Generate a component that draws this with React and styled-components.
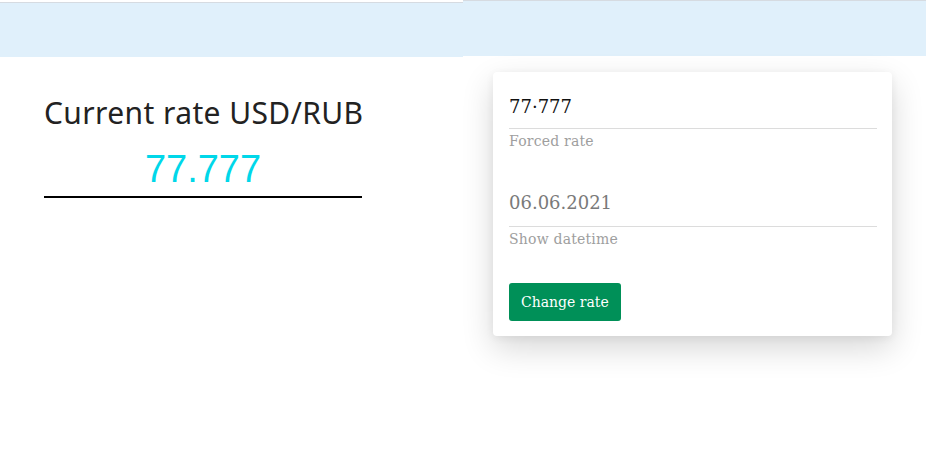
import React from 'react';
import styled, { createGlobalStyle } from 'styled-components';

const GlobalStyle = createGlobalStyle`
  body {
    margin: 0;
    background: #ffffff;
  }
`;

const Page = styled.div`
  display: flex;
  width: 926px;
  height: 463px;
  overflow: hidden;
`;

const Half = styled.div`
  width: 463px;
  padding-top: ${(p) => p.offset || 0}px;
  box-sizing: border-box;
`;

const Header = styled.div`
  height: ${(p) => p.h}px;
  background: #e0f0fb;
  border-top: 1px solid #d6dbe1;
`;

const RateBox = styled.div`
  margin: 36px 0 0 44px;
  width: 318px;
  text-align: center;
`;

const RateTitle = styled.h2`
  margin: 0;
  font-family: 'Noto Sans', sans-serif;
  font-size: 30px;
  font-weight: normal;
  line-height: 40px;
  letter-spacing: 0.4px;
  color: #222;
  text-align: left;
  white-space: nowrap;
`;

const RateValue = styled.div`
  margin-top: 12px;
  font-family: 'Liberation Sans', sans-serif;
  font-size: 38px;
  line-height: 48px;
  color: #00d7e9;
  border-bottom: 2px solid #000;
  padding-bottom: 3px;
`;

const Card = styled.div`
  margin: 16px 0 0 30px;
  width: 399px;
  background: #fff;
  border-radius: 4px;
  box-shadow: 0 12px 32px rgba(0, 0, 0, 0.16), 0 2px 8px rgba(0, 0, 0, 0.06);
  padding: 16px 15px 15px 16px;
  box-sizing: border-box;
  font-family: 'DejaVu Serif', serif;
`;

const Field = styled.div`
  margin-bottom: ${(p) => p.gap}px;
`;

const Input = styled.div`
  font-size: 18px;
  line-height: 24px;
  padding: ${(p) => (p.disabled ? '5px 0 11px' : '7px 0 9px')};
  color: ${(p) => (p.disabled ? '#7a7a7a' : '#111')};
  border-bottom: 1px solid #dcdcdc;
`;

const Label = styled.div`
  padding-top: 2px;
  font-size: 14px;
  line-height: 20px;
  letter-spacing: 0.2px;
  color: #9e9e9e;
`;

const Button = styled.button`
  display: block;
  background: #009058;
  color: #fff;
  border: none;
  border-radius: 3px;
  height: 38px;
  padding: 0 12px;
  font-family: 'DejaVu Serif', serif;
  font-size: 14px;
`;

export default function App() {
  return (
    <>
      <GlobalStyle />
      <Page>
        <Half offset={2}>
          <Header h={54} />
          <RateBox>
            <RateTitle>Current rate USD/RUB</RateTitle>
            <RateValue>77.777</RateValue>
          </RateBox>
        </Half>
        <Half>
          <Header h={55} />
          <Card>
            <Field gap={35}>
              <Input>77·777</Input>
              <Label>Forced rate</Label>
            </Field>
            <Field gap={34}>
              <Input disabled>06.06.2021</Input>
              <Label>Show datetime</Label>
            </Field>
            <Button>Change rate</Button>
          </Card>
        </Half>
      </Page>
    </>
  );
}
